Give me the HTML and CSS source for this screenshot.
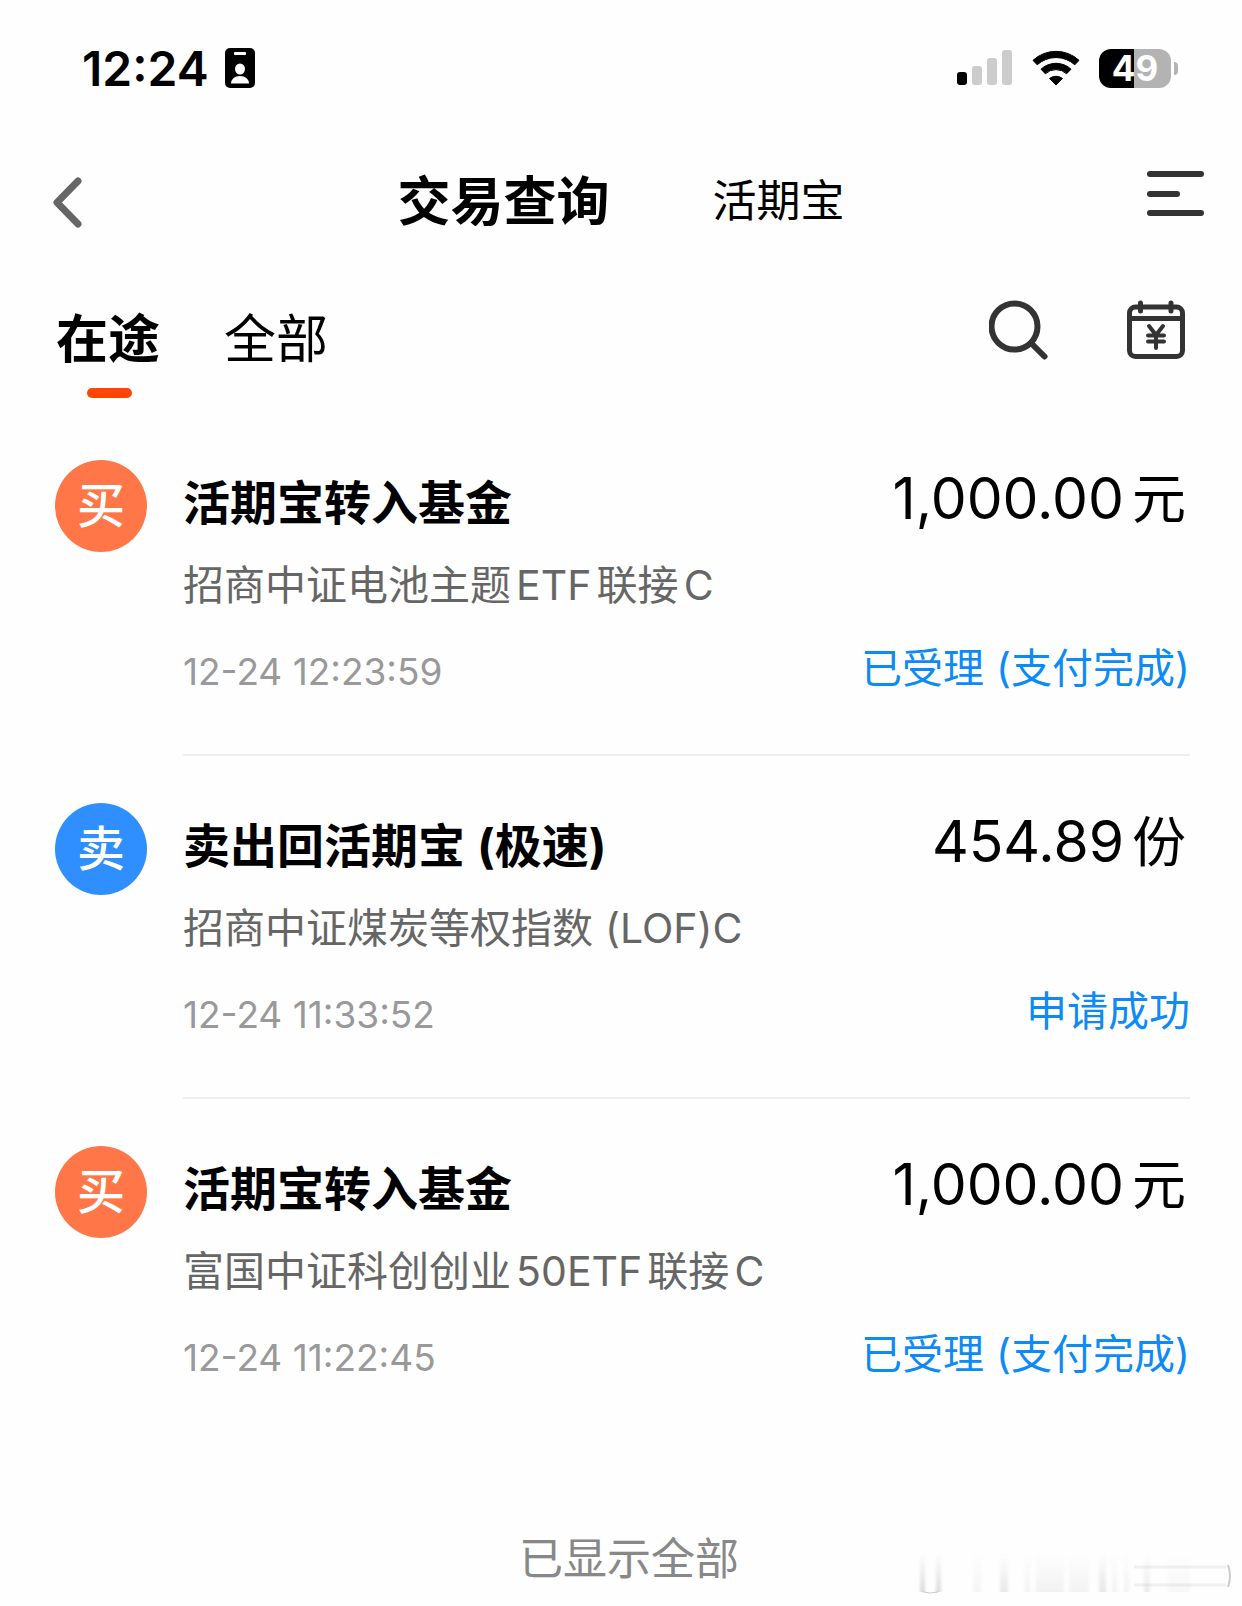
FILE: index.html
```html
<!DOCTYPE html>
<html lang="zh-CN">

<head>
    <meta charset="UTF-8">
    <meta name="viewport" content="width=device-width, initial-scale=1.0">
    <title>交易查询</title>
    <link rel="stylesheet" href="styles.css">
</head>

<body>
    <div class="statusbar">
        <div class="status-left">
            <span class="time">12:24</span>
            <svg width="30" height="40" viewBox="0 0 30 40">
                <rect width="30" height="40" rx="5" fill="#000" />
                <rect x="9" y="4" width="12" height="3" rx="1" fill="#fff" />
                <ellipse cx="15" cy="21" rx="5" ry="5.500" fill="#fff" />
                <path d="M6 35.500C6 31 10 28 15 28s9 3 9 7.500z" fill="#fff" />
            </svg>
        </div>
        <div class="status-right">
            <svg width="56" height="36" viewBox="0 0 56 36">
                <rect x="0" y="22" width="10" height="13" rx="3" fill="#000" />
                <rect x="15" y="16" width="10" height="19" rx="3" fill="#ccc" />
                <rect x="30" y="8" width="10" height="27" rx="3" fill="#ccc" />
                <rect x="45" y="0" width="10" height="35" rx="3" fill="#ccc" />
            </svg>
            <svg width="48" height="36" viewBox="0 0 48 36">
                <path d="M1 10.300A34 34 0 0 1 47 10.300L42.800 14.800A28 28 0 0 0 5.200 14.800Z" fill="#000" stroke="#000" stroke-linejoin="round" />
                <path d="M9 19.200A22 22 0 0 1 39 19.200L34.600 23.800A15.500 15.500 0 0 0 13.400 23.800Z" fill="#000" stroke="#000" stroke-linejoin="round" />
                <path d="M17.500 28.500A10.500 10.500 0 0 1 30.500 28.500L24 35Z" fill="#000" stroke="#000" stroke-linejoin="round" />
            </svg>
            <div class="battery"><span>49</span></div>
        </div>
    </div>

    <header class="topbar">
        <button class="icon-btn back" type="button" aria-label="返回">
            <svg width="30" height="62" viewBox="0 0 30 62">
                <path d="M25 14L4 35.500L25 57" fill="none" stroke="#666" stroke-width="7" stroke-linecap="round" stroke-linejoin="round" />
            </svg>
        </button>
        <nav class="nav">
            <h1 class="nav-title">交易查询</h1>
            <a class="nav-link" href="#">活期宝</a>
        </nav>
        <button class="icon-btn menu" type="button" aria-label="菜单">
            <svg width="58" height="56" viewBox="0 0 58 56">
                <path d="M4 4H55M4 24H31M4 43H55" fill="none" stroke="#333" stroke-width="6" stroke-linecap="round" />
            </svg>
        </button>
    </header>

    <div class="filters">
        <div class="tabs">
            <button class="tab active" type="button">在途</button>
            <button class="tab" type="button">全部</button>
        </div>
        <div class="tools">
            <button class="icon-btn" type="button" aria-label="搜索">
                <svg width="60" height="60" viewBox="0 0 60 60">
                    <circle cx="25.500" cy="26.500" r="23" fill="none" stroke="#333" stroke-width="6" />
                    <path d="M43 44L55.500 56.500" stroke="#333" stroke-width="6" stroke-linecap="round" />
                </svg>
            </button>
            <button class="icon-btn" type="button" aria-label="日历">
                <svg width="58" height="60" viewBox="0 0 58 60">
                    <rect x="2.500" y="7" width="53" height="49.500" rx="6" fill="none" stroke="#333" stroke-width="5" />
                    <path d="M3 18.500H55M13.500 3V11M44 3V11" fill="none" stroke="#333" stroke-width="5" stroke-linecap="round" />
                    <path d="M22 26L29 35L36 26M29 35V48M21 35.500H37M21 41.500H37" fill="none" stroke="#333" stroke-width="4" stroke-linecap="round" stroke-linejoin="round" />
                </svg>
            </button>
        </div>
    </div>

    <main class="records">
        <section class="record">
            <div class="badge buy">买</div>
            <div class="record-body">
                <div class="row">
                    <h2 class="name">活期宝转入基金</h2>
                    <div class="amount">1,000.00<span class="unit">元</span></div>
                </div>
                <p class="fund">招商中证电池主题ETF联接C</p>
                <div class="row">
                    <span class="date">12-24 12:23:59</span>
                    <span class="state">已受理<span class="note">(支付完成)</span></span>
                </div>
            </div>
        </section>

        <section class="record">
            <div class="badge sell">卖</div>
            <div class="record-body">
                <div class="row">
                    <h2 class="name">卖出回活期宝<span class="note">(极速)</span></h2>
                    <div class="amount">454.89<span class="unit">份</span></div>
                </div>
                <p class="fund">招商中证煤炭等权指数<span class="note">(LOF)C</span></p>
                <div class="row">
                    <span class="date">12-24 11:33:52</span>
                    <span class="state">申请成功</span>
                </div>
            </div>
        </section>

        <section class="record">
            <div class="badge buy">买</div>
            <div class="record-body">
                <div class="row">
                    <h2 class="name">活期宝转入基金</h2>
                    <div class="amount">1,000.00<span class="unit">元</span></div>
                </div>
                <p class="fund">富国中证科创创业50ETF联接C</p>
                <div class="row">
                    <span class="date">12-24 11:22:45</span>
                    <span class="state">已受理<span class="note">(支付完成)</span></span>
                </div>
            </div>
        </section>
    </main>

    <footer class="footer">
        <p>已显示全部</p>
        <!-- faint smudge in the corner -->
        <svg class="smudge" width="324" height="46" viewBox="0 0 324 46">
            <defs>
                <linearGradient id="fade" x1="0" y1="0" x2="0" y2="1">
                    <stop offset="0" stop-color="#888" stop-opacity="0" />
                    <stop offset="1" stop-color="#888" stop-opacity="1" />
                </linearGradient>
                <filter id="soft" x="-5%" y="-5%" width="110%" height="110%">
                    <feGaussianBlur stdDeviation="1.500 0" />
                </filter>
            </defs>
            <g fill="url(#fade)" filter="url(#soft)">
                <rect x="2" y="0" width="5" height="38" opacity="0.300" />
                <rect x="18" y="0" width="5" height="38" opacity="0.300" />
                <rect x="55" y="0" width="8" height="38" opacity="0.080" />
                <rect x="82" y="0" width="8" height="38" opacity="0.180" />
                <rect x="107" y="0" width="5" height="38" opacity="0.100" />
                <rect x="118" y="0" width="28" height="38" opacity="0.110" />
                <rect x="151" y="0" width="20" height="38" opacity="0.100" />
                <rect x="181" y="0" width="7" height="38" opacity="0.200" />
                <rect x="194" y="0" width="5" height="38" opacity="0.100" />
                <rect x="206" y="0" width="5" height="38" opacity="0.100" />
                <rect x="226" y="0" width="6" height="38" opacity="0.160" />
                <rect x="250" y="0" width="22" height="38" opacity="0.060" />
            </g>
            <path d="M216 13H308M216 31H308" fill="none" stroke="#bbb" stroke-width="3" opacity="0.200" />
            <path d="M310 11Q314 22 310 33" fill="none" stroke="#999" stroke-width="2" opacity="0.500" />
            <path d="M5 38Q12 40 20 38" fill="none" stroke="#999" opacity="0.500" />
        </svg>
    </footer>
</body>

</html>
```

FILE: styles.css
```css
* {
    box-sizing: border-box;
}

body {
    margin: 0;
    min-height: 100vh;
    background-color: #fefefe;
    color: #000;
    font-family: Inter, "Noto Sans CJK SC", sans-serif;
    text-autospace: normal;
}

h1,
h2,
p {
    margin: 0;
}

svg {
    display: block;
}

button {
    padding: 0;
    border: 0;
    background: none;
    color: inherit;
    font-family: inherit;
    cursor: pointer;
}

/* status bar */

.statusbar {
    display: flex;
    justify-content: space-between;
    align-items: center;
    height: 136px;
    padding: 0 64px 0 82px;
}

.status-left {
    display: flex;
    align-items: center;
    gap: 16px;
}

.time {
    font-size: 48px;
    font-weight: 600;
}

.status-right {
    display: flex;
    align-items: center;
    gap: 19px;
}

.battery {
    position: relative;
    width: 72px;
    height: 39px;
    margin-right: 7px;
    border-radius: 12px;
    background: linear-gradient(to right, #000 49%, #b3b3b3 49%);
    color: #fff;
    font-size: 35px;
    font-weight: 700;
    line-height: 39px;
    text-align: center;
}

.battery::after {
    content: "";
    position: absolute;
    top: 13px;
    right: -7px;
    width: 4px;
    height: 13px;
    border-radius: 0 4px 4px 0;
    background: #b3b3b3;
}

/* top bar */

.topbar {
    display: grid;
    grid-template-columns: 1fr auto 1fr;
    align-items: center;
    height: 124px;
    padding: 0 38px;
}

.back {
    justify-self: start;
    padding-left: 15px;
}

.menu {
    justify-self: end;
}

.nav {
    display: flex;
    align-items: center;
    gap: 103px;
}

.nav-title {
    font-size: 53px;
    font-weight: 600;
}

.nav-link {
    color: #000;
    font-size: 44px;
    text-decoration: none;
}

/* tabs */

.filters {
    display: flex;
    justify-content: space-between;
    align-items: center;
    height: 153px;
    padding: 0 57px 0 56px;
}

.tabs {
    display: flex;
    gap: 64px;
    padding-top: 6px;
}

.tab {
    position: relative;
    font-size: 52px;
    line-height: 60px;
}

.tab.active {
    font-weight: 700;
}

.tab.active::after {
    content: "";
    position: absolute;
    left: 50%;
    bottom: -28px;
    width: 45px;
    height: 10px;
    margin-left: -21px;
    border-radius: 5px;
    background: #ff4505;
}

.tools {
    display: flex;
    gap: 78px;
    padding-bottom: 14px;
}

/* records */

.record {
    display: flex;
    gap: 36px;
    padding: 47px 52px 0 55px;
}

.badge {
    flex: none;
    width: 92px;
    height: 92px;
    border-radius: 50%;
    color: #fff;
    font-size: 48px;
    font-weight: 500;
    line-height: 92px;
    text-align: center;
}

.buy {
    background: #ff7748;
}

.sell {
    background: #308fff;
}

.record-body {
    flex: 1;
    padding: 13px 0 53px;
    border-bottom: 2px solid #eee;
}

.record:last-child .record-body {
    border-bottom-color: transparent;
}

.row {
    display: flex;
    justify-content: space-between;
    align-items: center;
    height: 60px;
}

.name {
    font-size: 47px;
    font-weight: 700;
    line-height: 60px;
}

.note {
    margin-left: 12px;
}

.amount {
    display: flex;
    align-items: baseline;
    gap: 8px;
    padding: 0 4px 8px 0;
    font-size: 57px;
    line-height: 60px;
}

.unit {
    font-size: 54px;
}

.fund {
    margin: 22px 0 26px;
    color: #666;
    font-size: 41px;
    line-height: 60px;
}

.date {
    color: #999;
    font-size: 37px;
}

.state {
    padding-bottom: 6px;
    color: #0d8bf5;
    font-size: 41px;
    line-height: 54px;
}

/* footer */

.footer {
    position: relative;
    padding: 87px 0 17px 16px;
    color: #888;
    font-size: 44px;
    line-height: 60px;
    text-align: center;
}

.smudge {
    position: absolute;
    right: 0;
    bottom: 6px;
}
```
